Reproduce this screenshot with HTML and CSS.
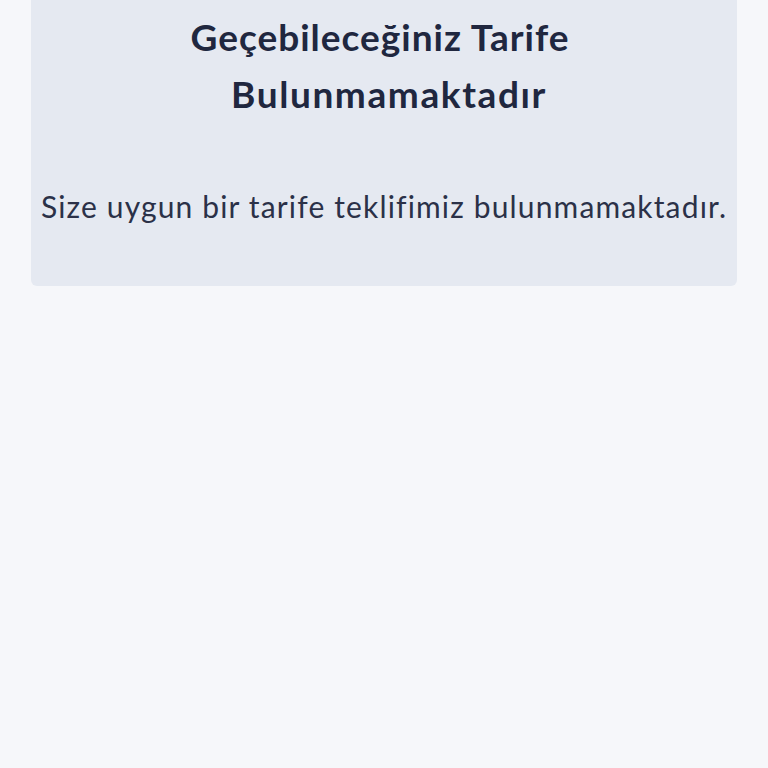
FILE: index.html
```html
<!DOCTYPE html>
<html lang="tr">
<head>
  <meta charset="UTF-8">
  <title>Tarife</title>
  <meta name="viewport" content="width=device-width, initial-scale=1">
  <link rel="stylesheet" href="styles.css">
</head>
<body>
  <div class="page">
    <div class="empty-card">
      <h2 class="empty-title">
        <span class="line-1">Geçebileceğiniz Tarife</span>
        <span class="line-2">Bulunmamaktadır</span>
      </h2>
      <p class="empty-text">Size uygun bir tarife teklifimiz bulunmamaktadır.</p>
    </div>
  </div>
</body>
</html>
```

FILE: styles.css
```css
html, body {
  margin: 0;
  padding: 0;
  background: #f6f7fa;
}
body {
  font-family: Lato, "Noto Sans", Arial, sans-serif;
  color: #252b42;
}
.page {
  padding: 0 31px;
}
.empty-card {
  margin-top: -20px;
  padding: 28px 0 60px;
  background: #e5e9f1;
  border-radius: 6px;
  text-align: center;
}
.empty-title {
  margin: 0;
  font-size: 37px;
  line-height: 57px;
  font-weight: 700;
  letter-spacing: 1px;
  color: #20273f;
}
.empty-title span {
  display: block;
}
.empty-title .line-1 {
  padding-right: 8px;
}
.empty-title .line-2 {
  padding-left: 10px;
  letter-spacing: 1.6px;
}
.empty-text {
  margin: 64px 0 0;
  font-size: 30px;
  line-height: 40px;
  letter-spacing: 1.15px;
  color: #2b3148;
}
```
